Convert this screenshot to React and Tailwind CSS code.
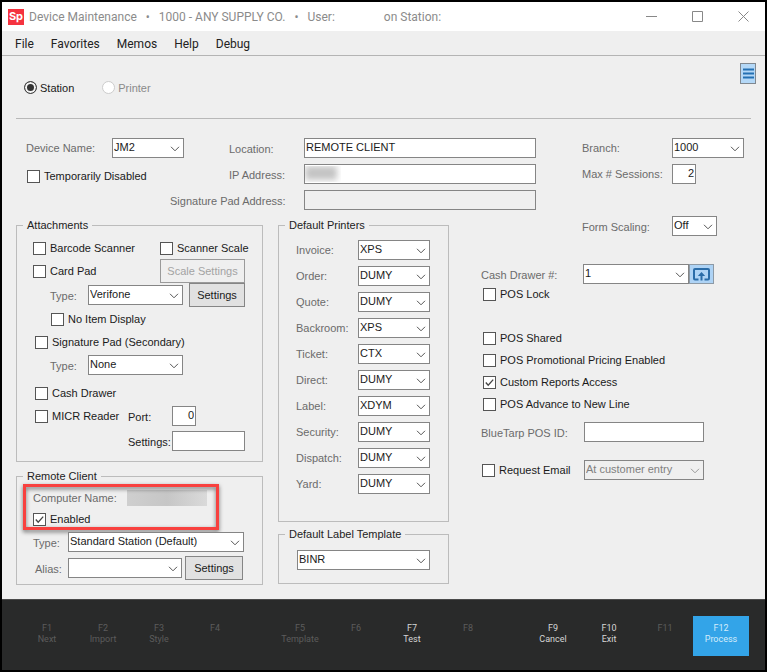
import { useId, useState } from 'react'
import clsx from 'clsx'

const PRINTERS = [
  ['Invoice:', 'XPS'],
  ['Order:', 'DUMY'],
  ['Quote:', 'DUMY'],
  ['Backroom:', 'XPS'],
  ['Ticket:', 'CTX'],
  ['Direct:', 'DUMY'],
  ['Label:', 'XDYM'],
  ['Security:', 'DUMY'],
  ['Dispatch:', 'DUMY'],
  ['Yard:', 'DUMY'],
]

// three groups of four, same as the keyboard
const FUNCTION_KEYS = [
  [
    { key: 'F1', name: 'Next' },
    { key: 'F2', name: 'Import' },
    { key: 'F3', name: 'Style' },
    { key: 'F4' },
  ],
  [
    { key: 'F5', name: 'Template' },
    { key: 'F6' },
    { key: 'F7', name: 'Test', enabled: true },
    { key: 'F8' },
  ],
  [
    { key: 'F9', name: 'Cancel', enabled: true },
    { key: 'F10', name: 'Exit', enabled: true },
    { key: 'F11' },
    { key: 'F12', name: 'Process', enabled: true, primary: true },
  ],
]

function FieldLabel({ className, dark, ...props }) {
  return (
    <label
      className={clsx('shrink-0 whitespace-nowrap pt-0.5', dark ? 'text-[#222]' : 'text-[#6b6b6b]', className)}
      {...props}
    />
  )
}

function Select({ id, value, options, className, disabled, label }) {
  return (
    <div className={clsx('relative h-5', className)}>
      <select
        id={id}
        aria-label={label}
        defaultValue={value}
        disabled={disabled}
        className="block h-5 w-full appearance-none border border-[#858585] bg-white pb-0.5 pl-px pr-4 text-[#1a1a1a] disabled:bg-[#efefef] disabled:text-[#808080] disabled:opacity-100"
      >
        {(options || [value]).map((o) => <option key={o}>{o}</option>)}
      </select>
      <svg
        viewBox="0 0 10 6"
        className={clsx('pointer-events-none absolute right-1 top-2 h-1.5 w-2.5', disabled ? 'text-[#999]' : 'text-[#555]')}
        fill="none"
        stroke="currentColor"
      >
        <path d="M1 .8 5 4.8 9 .8" />
      </svg>
    </div>
  )
}

function TextInput({ className, ...props }) {
  return (
    <input
      type="text"
      className={clsx('block h-5 border border-[#858585] bg-white px-px pb-0.5 text-[#1a1a1a] disabled:bg-[#efefef]', className)}
      {...props}
    />
  )
}

function Check({ children, checked, className }) {
  return (
    <label className={clsx('flex items-center gap-1 whitespace-nowrap text-[#1a1a1a]', className)}>
      <span className="relative block size-[13px] shrink-0">
        <input
          type="checkbox"
          defaultChecked={checked}
          className="peer block size-[13px] appearance-none border border-[#555] bg-white"
        />
        <svg
          viewBox="0 0 13 13"
          className="pointer-events-none absolute inset-0 hidden size-[13px] peer-checked:block"
          fill="none"
          stroke="#444"
          strokeWidth="1.3"
        >
          <path d="M2.8 6.5 5.2 9.2 10.2 3.6" />
        </svg>
      </span>
      <span>{children}</span>
    </label>
  )
}

function Radio({ children, muted, ...props }) {
  return (
    <label className={clsx('flex items-center gap-[3px]', muted ? 'text-[#8a8a8a]' : 'text-[#1a1a1a]')}>
      <input
        type="radio"
        name="device-kind"
        className={clsx(
          'size-[13px] appearance-none rounded-full border bg-white checked:bg-[#333] checked:shadow-[inset_0_0_0_2px_#f4f4f4]',
          muted ? 'border-[#ccc]' : 'border-[#444]'
        )}
        {...props}
      />
      <span className="pt-px">{children}</span>
    </label>
  )
}

function Button({ className, ...props }) {
  return (
    <button
      type="button"
      className={clsx(
        'h-6 border border-[#858585] bg-[#e1e1e1] text-[#1a1a1a] disabled:border-[#9a9a9a] disabled:bg-[#efefef] disabled:text-[#a3a3a3]',
        className
      )}
      {...props}
    />
  )
}

function Group({ title, className, children }) {
  return (
    <fieldset className="min-w-0 border border-[#bcbcbc]">
      <legend className="ml-1.5 h-4 px-1 leading-4 text-[#222]">{title}</legend>
      <div className={className}>{children}</div>
    </fieldset>
  )
}

function TitleBar() {
  return (
    <header className="flex h-[29px] items-center bg-white pl-1.5 font-['Roboto',sans-serif] text-xs text-[#8b8b8b]">
      <span className="flex size-4 shrink-0 items-center justify-center bg-[#f5333f] font-['Inter',sans-serif] text-[11px] font-bold leading-none text-white">
        Sp
      </span>
      <h1 className="ml-[5px] flex items-center gap-[9px] whitespace-nowrap">
        <span>Device Maintenance</span>
        <span>•</span>
        <span>1000 - ANY SUPPLY CO.</span>
        <span>•</span>
        <span>User:</span>
        <span className="ml-10">on Station:</span>
      </h1>
      <div className="ml-auto flex h-full items-center gap-[35px] pr-4 text-[#888]">
        <button type="button" aria-label="Minimize">
          <svg viewBox="0 0 11 11" className="size-[11px]" stroke="currentColor"><path d="M0 5.5h11" /></svg>
        </button>
        <button type="button" aria-label="Maximize">
          <svg viewBox="0 0 11 11" className="size-[11px]" fill="none" stroke="currentColor"><path d="M.5.5h10v10H.5z" /></svg>
        </button>
        <button type="button" aria-label="Close">
          <svg viewBox="0 0 11 11" className="size-[11px]" stroke="currentColor"><path d="m.5.5 10 10M10.5.5l-10 10" /></svg>
        </button>
      </div>
    </header>
  )
}

function MenuBar() {
  return (
    <nav className="flex h-[25px] items-center gap-[17px] border-b border-[#b4b4b4] pl-[13px] pt-px font-['Roboto',sans-serif] text-xs text-[#222]">
      {['File', 'Favorites', 'Memos', 'Help', 'Debug'].map((item) => (
        <button key={item} type="button">{item}</button>
      ))}
    </nav>
  )
}

function DeviceFields() {
  return (
    <section className="flex items-start pt-[19px]">
      <div className="grid w-[144px] grid-cols-[86px_72px] gap-y-1.5 pl-2.5">
        <FieldLabel htmlFor="device">Device Name:</FieldLabel>
        <Select id="device" value="JM2" />
        <Check className="col-span-2 mt-1 pl-px">Temporarily Disabled</Check>
      </div>

      <div className="ml-2.5 grid flex-1 grid-cols-[134px_1fr] items-center gap-y-1.5">
        <FieldLabel htmlFor="location" className="pl-[59px]">Location:</FieldLabel>
        <TextInput id="location" defaultValue="REMOTE CLIENT" />
        <FieldLabel htmlFor="ip" className="pl-[59px]">IP Address:</FieldLabel>
        <div className="relative">
          <TextInput id="ip" className="w-full" />
          {/* redacted address */}
          <span className="pointer-events-none absolute inset-y-0.5 left-px w-9 overflow-hidden">
            <span className="block h-3.5 w-8 bg-[#c4c4c4] blur-[3px]" />
          </span>
        </div>
        <FieldLabel htmlFor="sig-address">Signature Pad Address:</FieldLabel>
        <TextInput id="sig-address" disabled />
      </div>

      <div className="ml-[46px] mr-[7px] grid grid-cols-[90px_72px] gap-y-1.5">
        <FieldLabel htmlFor="branch">Branch:</FieldLabel>
        <Select id="branch" value="1000" />
        <FieldLabel htmlFor="sessions">Max # Sessions:</FieldLabel>
        <TextInput id="sessions" defaultValue="2" className="w-6 text-right" />
      </div>
    </section>
  )
}

function Attachments() {
  return (
    <Group title="Attachments" className="pb-1.5 pl-4 pt-1">
      <div className="flex h-[22px] items-center">
        <Check className="w-[127px]">Barcode Scanner</Check>
        <Check>Scanner Scale</Check>
      </div>
      <div className="flex h-6 items-center">
        <Check className="w-[127px]">Card Pad</Check>
        <Button disabled className="w-[85px]">Scale Settings</Button>
      </div>
      <div className="flex h-6 items-center">
        <FieldLabel htmlFor="card-type" className="w-[55px] pl-[17px]">Type:</FieldLabel>
        <Select id="card-type" value="Verifone" className="w-[95px]" />
        <Button className="ml-1.5 w-14">Settings</Button>
      </div>
      <Check className="h-6 pl-[18px]">No Item Display</Check>
      <Check className="h-[22px] pl-0.5">Signature Pad (Secondary)</Check>
      <div className="flex h-6 items-center">
        <FieldLabel htmlFor="sig-type" className="w-[55px] pl-[17px]">Type:</FieldLabel>
        <Select id="sig-type" value="None" className="w-[95px]" />
      </div>
      <Check className="mt-1 h-6 pl-0.5">Cash Drawer</Check>
      <div className="flex h-[22px] items-center">
        <Check className="w-[95px] pl-0.5">MICR Reader</Check>
        <FieldLabel dark htmlFor="port" className="w-11">Port:</FieldLabel>
        <TextInput id="port" defaultValue="0" className="w-6 text-right" />
      </div>
      <div className="flex h-7 items-center pl-[95px]">
        <FieldLabel dark htmlFor="micr-settings" className="w-11">Settings:</FieldLabel>
        <TextInput id="micr-settings" className="w-[73px]" />
      </div>
    </Group>
  )
}

function RemoteClient() {
  return (
    <Group title="Remote Client" className="pb-[3px] pl-4">
      <div className="relative pt-[3px]">
        <div className="flex h-[22px] items-center text-[#6b6b6b]">
          <span className="w-[94px]">Computer Name:</span>
          <span className="h-4 w-20 bg-linear-to-r from-[#cfcfcf] via-[#c6c6c6] to-[#dadada]" />
        </div>
        <Check checked className="h-5">Enabled</Check>
        <div className="pointer-events-none absolute -bottom-px -left-2.5 top-0 w-[196px] border-[3px] border-[#f8413f] drop-shadow-[0_2px_2px_rgba(0,0,0,0.55)]" />
      </div>
      <div className="flex h-[26px] items-center">
        <FieldLabel htmlFor="client-type" className="w-[35px]">Type:</FieldLabel>
        <Select id="client-type" value="Standard Station (Default)" className="w-44" />
      </div>
      <div className="flex h-[26px] items-center">
        <FieldLabel htmlFor="alias" className="w-[35px] pl-0.5">Alias:</FieldLabel>
        <Select id="alias" value="" className="w-[114px]" />
        <Button className="ml-[3px] w-[58px]">Settings</Button>
      </div>
    </Group>
  )
}

function Printers() {
  const id = useId()
  return (
    <Group title="Default Printers" className="pb-[27px] pl-[17px] pt-[7px]">
      <div className="grid grid-cols-[62px_72px] gap-y-1.5">
        {PRINTERS.map(([name, value]) => (
          <div key={name} className="contents">
            <FieldLabel htmlFor={id + name}>{name}</FieldLabel>
            <Select id={id + name} value={value} options={['XPS', 'DUMY', 'CTX', 'XDYM']} />
          </div>
        ))}
      </div>
    </Group>
  )
}

function PosOptions() {
  return (
    <div className="pl-[17px]">
      <div className="flex h-5 items-center pl-[101px]">
        <FieldLabel htmlFor="scaling" className="w-[90px]">Form Scaling:</FieldLabel>
        <Select id="scaling" value="Off" className="w-[45px]" />
      </div>
      <div className="mt-7 flex h-5 items-center">
        <FieldLabel htmlFor="drawer" className="w-[102px]">Cash Drawer #:</FieldLabel>
        <Select id="drawer" value="1" className="w-[106px]" />
        <button
          type="button"
          aria-label="Open cash drawer"
          className="flex h-5 w-[25px] items-center justify-center border border-[#8d9aa6] bg-[#aed3f5]"
        >
          <svg viewBox="0 0 17 13" className="h-[13px] w-[17px]" fill="none" stroke="#2a6ca8" strokeWidth="2">
            <path d="M5.500 11.500H2A1 1 0 0 1 1 10.500V2A1 1 0 0 1 2 1H15A1 1 0 0 1 16 2V10.500A1 1 0 0 1 15 11.500H11.500" />
            <path d="M8.500 12.500V6" />
            <path d="M4.800 8 8.500 4 12.200 8Z" fill="#2a6ca8" stroke="none" />
          </svg>
        </button>
      </div>
      <Check className="h-5 pl-0.5">POS Lock</Check>

      <div className="mt-[23px] pl-0.5">
        <Check className="h-[22px]">POS Shared</Check>
        <Check className="h-[22px]">POS Promotional Pricing Enabled</Check>
        <Check checked className="h-[22px]">Custom Reports Access</Check>
        <Check className="h-[22px]">POS Advance to New Line</Check>
      </div>

      <div className="mt-[7px] flex h-5 items-center">
        <FieldLabel htmlFor="bluetarp" className="w-[103px]">BlueTarp POS ID:</FieldLabel>
        <TextInput id="bluetarp" className="w-[120px]" />
      </div>
      <div className="mt-[18px] flex h-5 items-center">
        <Check className="w-[103px] pl-px">Request Email</Check>
        <Select label="Request email when" value="At customer entry" disabled className="w-[120px]" />
      </div>
    </div>
  )
}

function FunctionKeys() {
  return (
    <footer className="flex justify-between border-t border-[#4a4a4a] bg-[#292a2a] pb-3.5 pl-[17px] pr-4 pt-4 font-['Roboto',sans-serif] text-[9px] leading-[11px]">
      {FUNCTION_KEYS.map((group) => (
        <div key={group[0].key} className="flex">
          {group.map(({ key, name, enabled, primary }) => (
            <button
              key={key}
              type="button"
              disabled={!enabled}
              className={clsx(
                'flex h-10 w-14 flex-col items-center pt-[7px]',
                primary && 'bg-[#33a4e8] text-[#d3ecfb]',
                enabled && !primary && 'text-[#d6d6d6]',
                !enabled && 'text-[#5c5c5c]'
              )}
            >
              <span>{key}</span>
              {name && <span>{name}</span>}
            </button>
          ))}
        </div>
      ))}
    </footer>
  )
}

export default function App() {
  const [kind, setKind] = useState('station')

  return (
    <div className="flex min-h-screen flex-col border-2 border-black bg-[#efefef] font-['Liberation_Sans',Arial,sans-serif] text-[11px] leading-4">
      <TitleBar />
      <MenuBar />
      <main className="flex-1 px-3.5 pb-3">
        <div className="flex h-[62px] items-center gap-7 pl-2">
          <Radio checked={kind === 'station'} onChange={() => setKind('station')}>Station</Radio>
          <Radio muted checked={kind === 'printer'} onChange={() => setKind('printer')}>Printer</Radio>
          <button
            type="button"
            aria-label="Options"
            className="-mr-[5px] ml-auto mt-[7px] flex h-[21px] w-4 items-center justify-center self-start border border-[#808890] bg-[#b4d8f7]"
          >
            <svg viewBox="0 0 11 11" className="size-[11px]" stroke="#2470b3" strokeWidth="2">
              <path d="M0 1.500h11M0 5.500h11M0 9.500h11" />
            </svg>
          </button>
        </div>
        <hr className="border-[#b8b8b8]" />

        <DeviceFields />

        <section className="grid grid-cols-[247px_171px_1fr] gap-x-[15px]">
          {/* this row starts right under the signature pad address */}
          <div className="flex flex-col gap-1.5 pt-[7px]">
            <Attachments />
            <RemoteClient />
          </div>
          <div className="flex flex-col gap-1 pt-[7px]">
            <Printers />
            <Group title="Default Label Template" className="pb-[13px] pl-[18px] pt-2">
              <Select label="Default label template" value="BINR" className="w-[133px]" />
            </Group>
          </div>
          <div className="pt-1.5">
            <PosOptions />
          </div>
        </section>
      </main>
      <FunctionKeys />
    </div>
  )
}
